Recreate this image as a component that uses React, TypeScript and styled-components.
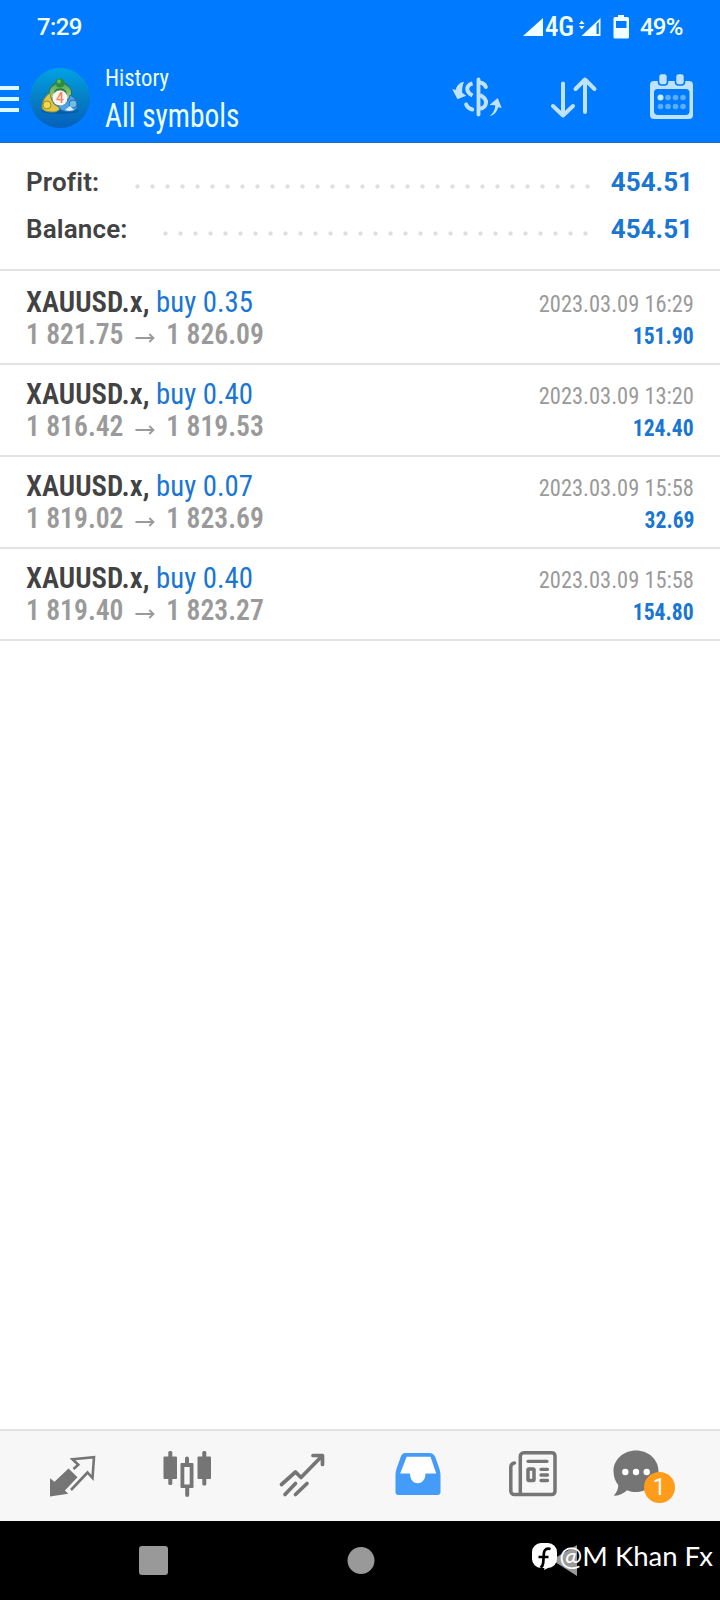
import React from 'react';
import styled, { createGlobalStyle } from 'styled-components';

const GlobalStyle = createGlobalStyle`
  *, *::before, *::after { box-sizing: border-box; }
  body {
    margin: 0;
    background: #fff;
    font-family: Roboto, "Liberation Sans", sans-serif;
  }
  svg { display: block; flex: none; overflow: visible; }
`;

const BLUE = '#1976d2';

const Screen = styled.div`
  display: flex;
  flex-direction: column;
  width: 720px;
  height: 1600px;
  background: #fff;
  overflow: hidden;
`;

const Header = styled.header`
  height: 143px;
  flex: none;
  background: #007aff;
  border-bottom: 1px solid #1a6fc4;
`;

const StatusBar = styled.div`
  display: flex;
  align-items: center;
  height: 54px;
  padding: 0 38px 0 37px;
  color: #f2ffff;
`;

const Clock = styled.span`
  flex: 1;
  font-size: 24px;
  font-weight: 500;
  letter-spacing: -0.6px;
`;

const Network = styled.span`
  width: 35px;
  padding-left: 2px;
  font-size: 27px;
  font-weight: 500;
  font-stretch: 75%;
  letter-spacing: -0.3px;
`;

const Percent = styled.span`
  width: 42px;
  font-size: 24px;
  font-weight: 500;
  letter-spacing: -0.8px;
`;

const BatterySlot = styled.span`
  margin: 0 11px 0 13px;
`;

const AppBar = styled.div`
  display: flex;
  height: 88px;
  align-items: flex-start;
`;

const MenuLines = styled.div`
  display: grid;
  gap: 7px;
  width: 19px;
  margin-top: 32px;
`;

const MenuLine = styled.i`
  height: 4px;
  background: #dcfaff;
`;

const Logo = styled.svg`
  margin: 14px 15px 0 11px;
`;

const Titles = styled.div`
  flex: 1;
  display: flex;
  flex-direction: column;
  padding-top: 8px;
  color: #ecffff;
  font-stretch: 75%;
`;

const Subtitle = styled.span`
  font-size: 24px;
  line-height: 32px;
  transform: scaleX(0.945);
  transform-origin: left;
`;

const Title = styled.h1`
  margin: 0;
  font-size: 32.5px;
  font-weight: 400;
  line-height: 45px;
  transform: scaleX(0.905);
  transform-origin: left;
`;

const Actions = styled.div`
  display: flex;
  margin-top: 15px;
  padding-right: 23px;
`;

const Action = styled.div<{ $gap?: number }>`
  margin-right: ${p => p.$gap ?? 0}px;
`;

const Summary = styled.section`
  flex: none;
  height: 128px;
  padding: 15px 27px 0 26px;
  border-bottom: 2px solid #e2e2e2;
`;

const SummaryRow = styled.div`
  display: flex;
  align-items: center;
  height: 47px;
  font-size: 26px;
  font-weight: 600;
`;

const SummaryLabel = styled.span<{ $width: number }>`
  width: ${p => p.$width}px;
  color: #424242;
  letter-spacing: 0.15px;
`;

const Dots = styled.span`
  flex: 1;
  height: 5px;
  margin: 10px 20px 0 0;
  background: radial-gradient(circle at 2.5px 2.5px, #dedede 1.7px, transparent 2.5px) 0 0 / 15px 5px repeat-x;
`;

const SummaryValue = styled.span`
  color: ${BLUE};
  font-weight: 700;
`;

const Deals = styled.ul`
  flex: 1;
  margin: 0;
  padding: 2px 0 0;
  list-style: none;
`;

const Deal = styled.li`
  display: flex;
  justify-content: space-between;
  height: 92px;
  padding: 13px 26px 0;
  border-bottom: 2px solid #e2e2e2;
  font-stretch: 75%;
`;

const DealSide = styled.div<{ $end?: boolean }>`
  display: flex;
  flex-direction: column;
  align-items: ${p => (p.$end ? 'flex-end' : 'flex-start')};
`;

const Symbol = styled.span`
  color: #424242;
  font-size: 30px;
  font-weight: 650;
  line-height: 32px;
  white-space: pre;
  transform: scaleX(0.959);
  transform-origin: left;
`;

const Volume = styled.span`
  color: ${BLUE};
  font-weight: 400;
`;

const Prices = styled.span`
  display: flex;
  align-items: center;
  color: #9a9a9a;
  font-size: 30px;
  font-weight: 650;
  line-height: 32px;
  transform: scaleX(0.92);
  transform-origin: left;
`;

const Arrow = styled.svg`
  margin: 7px 12.5px 0 13.5px;
`;

const Time = styled.span`
  color: #9a9a9a;
  font-size: 24px;
  line-height: 36px;
  transform: scaleX(0.935);
  transform-origin: right;
`;

const Gain = styled.span`
  color: ${BLUE};
  font-size: 24px;
  font-weight: 700;
  line-height: 28px;
  transform: scaleX(0.9);
  transform-origin: right;
`;

const TabBar = styled.nav`
  display: flex;
  align-items: center;
  height: 92px;
  flex: none;
  padding: 0 14px;
  background: #f7f7f7;
  border-top: 2px solid #e2e2e2;
`;

const Tab = styled.div<{ $drop?: number; $trail?: number }>`
  position: relative;
  display: flex;
  justify-content: center;
  width: calc(100% / 6);
  padding: ${p => p.$drop ?? 0}px ${p => p.$trail ?? 0}px 0 0;
`;

const Badge = styled.span`
  position: absolute;
  left: 53px;
  top: 20px;
  width: 31px;
  height: 31px;
  border-radius: 50%;
  background: #ff9c1a;
  color: #fff;
  font-size: 23px;
  line-height: 32px;
  text-align: center;
`;

const SystemBar = styled.footer`
  position: relative;
  display: flex;
  align-items: center;
  height: 79px;
  flex: none;
  padding: 0 143px 0 139px;
  justify-content: space-between;
  background: #000;
`;

const Watermark = styled.div`
  position: absolute;
  right: 7px;
  top: 14px;
  display: flex;
  align-items: center;
  gap: 2px;
  height: 40px;
  color: #fff;
  font-family: Lato, sans-serif;
  font-size: 27.5px;
  white-space: pre;
`;

const FacebookMark = styled.svg`
  margin-top: 3px;
`;

const deals = [
  { symbol: 'XAUUSD.x', side: 'buy 0.35', open: '1 821.75', close: '1 826.09', time: '2023.03.09 16:29', gain: '151.90' },
  { symbol: 'XAUUSD.x', side: 'buy 0.40', open: '1 816.42', close: '1 819.53', time: '2023.03.09 13:20', gain: '124.40' },
  { symbol: 'XAUUSD.x', side: 'buy 0.07', open: '1 819.02', close: '1 823.69', time: '2023.03.09 15:58', gain: '32.69' },
  { symbol: 'XAUUSD.x', side: 'buy 0.40', open: '1 819.40', close: '1 823.27', time: '2023.03.09 15:58', gain: '154.80' },
];

const AppLogo = () => (
  <Logo width="60" height="60" viewBox="0 0 60 60">
    <defs>
      <linearGradient id="disc" x1="0" y1="0" x2="0" y2="1">
        <stop offset="0" stopColor="#00a3e4" />
        <stop offset="0.5" stopColor="#067fc6" />
        <stop offset="1" stopColor="#0560bd" />
      </linearGradient>
      <linearGradient id="green" x1="0" y1="0" x2="0" y2="1">
        <stop offset="0" stopColor="#5fae5c" />
        <stop offset="1" stopColor="#a3d488" />
      </linearGradient>
    </defs>
    <circle cx="30" cy="30" r="30" fill="url(#disc)" />
    <ellipse cx="30" cy="43" rx="19" ry="3" fill="#064a93" opacity="0.5" />
    <path d="M23 29c-3-7 1-11 7-11s11 4 8 12" fill="#3f8f5c" stroke="#2c7443" strokeWidth="6.500" />
    <path d="M23 29c-3-7 1-11 7-11s11 4 8 12" fill="none" stroke="url(#green)" strokeWidth="4.500" />
    <path d="M20 25c-5 3-8 9-8 14 0 4 6 5 11 5 4 0 7-2 7-5-6-1-9-6-10-14z" fill="#dfc548" stroke="#8c8f34" strokeWidth="1" />
    <path d="M40 27c5 2 8 8 7 13-2 4-9 4-13 3-4-1-5-3-6-6 7 0 11-4 12-10z" fill="#4fa2df" stroke="#1e6fb6" strokeWidth="1" />
    <circle cx="17" cy="37" r="4" fill="#f0d94e" stroke="#9a8d28" strokeWidth="1" />
    <circle cx="43" cy="36" r="4" fill="#72bbed" stroke="#286fae" strokeWidth="1" />
    <circle cx="30" cy="15" r="4.600" fill="#2c8c3e" />
    <circle cx="29" cy="13.500" r="2" fill="#5fbb61" />
    <path d="M35 42l5-4 4 4-5 1z" fill="#d8f0fb" />
    <circle cx="30" cy="30" r="7.600" fill="#fff6ef" />
    <text x="30" y="35" textAnchor="middle" fontSize="14" fontWeight="500" fill="#ee8667" fontFamily="Roboto">4</text>
  </Logo>
);

const SwapCurrencyIcon = () => (
  <svg width="60" height="56" viewBox="0 0 60 56" fill="none" stroke="#bfe3ff" strokeWidth="4">
    <path d="M30.500 10.500v35" strokeLinecap="round" strokeWidth="3.800" />
    <path d="M24.500 14.300c-4 1.200-5.500 3.200-5.200 6.200.3 2.500 1.900 4.300 5.200 6" />
    <path d="M32 13.500c3.500.5 5 2 5.800 4.500" strokeLinecap="round" />
    <path d="M32 26c4.500 2.500 6.500 4.500 6 8-.4 3-2.300 5-6 5.800" />
    <path d="M18.200 35.500c.8 2.500 2.800 4.300 6 5" strokeLinecap="round" />
    <path d="M16 12.700C11 13.500 8.500 17 7.700 21L4.200 20l5.300 10.300 8.700-3.500-4-3c-.3-3.500.3-7.500 1.800-11.100z" fill="#bfe3ff" stroke="none" />
    <path d="M41.500 47c4.500-3.500 5.500-6.800 5.700-10.800L41.500 36l8.200-7 4 10-3.500-.7c-1.300 4-3.700 8.200-8.700 8.700z" fill="#bfe3ff" stroke="none" />
  </svg>
);

const SortIcon = () => (
  <svg width="58" height="56" viewBox="0 0 58 56" fill="none" stroke="#bfe3ff" strokeWidth="4" strokeLinecap="round" strokeLinejoin="round">
    <path d="M18 14.500v32M8 37l10 9.500L28 37M40 43V10.500M30.500 20l9.500-9.500 9.500 9.500" />
  </svg>
);

const CalendarIcon = () => (
  <svg width="50" height="56" viewBox="0 0 50 56">
    <path d="M8 12h34a4 4 0 0 1 4 4v30a4 4 0 0 1-4 4H7a4 4 0 0 1-4-4V16a4 4 0 0 1 4-4zM10.500 20a3.500 3.500 0 0 0-3.500 3.500V42a4 4 0 0 0 4 4h27.500a4 4 0 0 0 4-4V23.500a3.500 3.500 0 0 0-3.500-3.500z" fill="#bfe3ff" fillRule="evenodd" />
    <g fill="#bfe3ff" stroke="#007aff" strokeWidth="1.600">
      <rect x="11.500" y="4.500" width="9" height="11.500" rx="3" />
      <rect x="28.500" y="4.500" width="9" height="11.500" rx="3" />
    </g>
    <circle cx="13.500" cy="28.500" r="3" fill="#c8ecff" />
    <g fill="#5caeff">
      {[21, 28.5, 36].map(x => <circle key={x} cx={x} cy="28.500" r="2.800" />)}
      {[13.5, 21, 28.5, 36].map(x => <circle key={x} cx={x} cy="37.500" r="2.800" />)}
    </g>
  </svg>
);

const TradeIcon = () => (
  <svg width="48" height="48" viewBox="0 0 48 48">
    <path d="M20.500 13.500l9 8.700-12.600 13.300 3.300 3.300L2 41.500V23.300l4.500 3.500z" fill="#757575" />
    <path d="M25.500 14l4.800-4.300-5.800-5.500 21.500-2L44.500 23l-5-5.500L23 35" fill="none" stroke="#757575" strokeWidth="2.600" />
  </svg>
);

const CandlesIcon = () => (
  <svg width="48" height="48" viewBox="1 0 48 48" fill="#757575">
    <rect x="1.500" y="4.500" width="13.500" height="22.500" rx="1" /><rect x="6.300" y="-1" width="4" height="34" rx="1.500" />
    <rect x="35.500" y="4.500" width="13.500" height="22.500" rx="1" /><rect x="40.300" y="-1" width="4" height="34.500" rx="1.500" />
    <path d="M19.500 11H23V6.500a1.800 1.800 0 0 1 4 0V11h3.500a1 1 0 0 1 1 1V35a1 1 0 0 1-1 1h-3.300v7a2 2 0 0 1-4 0v-7H19.500a1 1 0 0 1-1-1V12a1 1 0 0 1 1-1zM22.300 15v17.500h5.400V15z" fillRule="evenodd" />
  </svg>
);

const TrendIcon = () => (
  <svg width="48" height="48" viewBox="0 0 48 48" fill="none" stroke="#757575" strokeWidth="3.700" strokeLinecap="round" strokeLinejoin="round">
    <path d="M3.500 30.500L17.500 18l5.500 5.500L44 2M35 1.500h9.500v9M7 40.500L17.500 29.500M17.500 40.500L29 29.500" />
  </svg>
);

const InboxIcon = () => (
  <svg width="48" height="48" viewBox="0 0 48 48">
    <path d="M12 0h23c3.500 0 5.300 1.500 6.500 4.500C44 12 46.500 17 46.500 22v17a3 3 0 0 1-3 3h-39a3 3 0 0 1-3-3V22c0-5 2.500-10 5-17.500C7.500 1.500 8.500 0 12 0z" fill="#459cf8" />
    <path d="M12.700 3.800 6.200 20.500H16c0 13 15.500 13 15.500 0H42.200L36.500 3.800z" fill="#fff" />
  </svg>
);

const NewsIcon = () => (
  <svg width="50" height="48" viewBox="0 0 50 48" fill="none" stroke="#757575" strokeWidth="3.500">
    <path d="M6.500 11a4 4 0 0 0-3.700 4v24a3.500 3.500 0 0 0 3.500 3.500H44A3.500 3.500 0 0 0 47 39V3.500A3.500 3.500 0 0 0 43.500.7H15.800a3.500 3.500 0 0 0-3.500 3.500V42" strokeLinecap="round" />
    <path d="M20 9.300h19M33 17.300h6.500M33 23h6.500M33 28.500h6.500" strokeLinecap="round" strokeWidth="3.300" />
    <rect x="20" y="17" width="6" height="11.500" rx="1" />
  </svg>
);

const ChatIcon = () => (
  <svg width="50" height="48" viewBox="0 0 50 48">
    <path d="M24 -1.500c12.500 0 22.500 9 22.500 20.500S36.500 40 24 40c-3.500 0-6-.5-9-1.800-3.500 3.500-8 5.500-13.300 5.500 3.200-3.500 4.700-7 4.500-10.700C3.200 29.500 1.500 24.500 1.500 19 1.500 7.500 11.500-1.500 24-1.500z" fill="#757575" />
    <g fill="#fff"><circle cx="13.300" cy="20" r="3.200" /><circle cx="24" cy="20" r="3.200" /><circle cx="34.700" cy="20" r="3.200" /></g>
  </svg>
);

export default function App() {
  return (
    <Screen>
      <GlobalStyle />
      <Header>
        <StatusBar>
          <Clock>7:29</Clock>
          <svg width="20" height="18" viewBox="0 0 20 18"><path d="M0 18L20 0v18z" fill="#f2ffff" /></svg>
          <Network>4G</Network>
          <svg width="22" height="18" viewBox="0 0 22 18">
            <path d="M1 6L3.800 2.500 6.600 6zM1 8l2.800 3.500L6.600 8z" fill="#f2ffff" />
            <path d="M3.500 18L22.500 0v18zM18.500 6v10h2.300V4z" fill="#f2ffff" fillRule="evenodd" />
          </svg>
          <BatterySlot>
            <svg width="16" height="24" viewBox="13 0 16 24">
              <path d="M18 0h6v2h3.500a1.500 1.500 0 0 1 1.500 1.500v18.500a1.500 1.500 0 0 1-1.500 1.500H15a1.500 1.500 0 0 1-1.500-1.500V3.500a1.500 1.500 0 0 1 1.500-1.500H18zM16 6v7h10.500V6z" fill="#f2ffff" fillRule="evenodd" />
            </svg>
          </BatterySlot>
          <Percent>49%</Percent>
        </StatusBar>
        <AppBar>
          <MenuLines><MenuLine /><MenuLine /><MenuLine /></MenuLines>
          <AppLogo />
          <Titles>
            <Subtitle>History</Subtitle>
            <Title>All symbols</Title>
          </Titles>
          <Actions>
            <Action $gap={37}><SwapCurrencyIcon /></Action>
            <Action $gap={44}><SortIcon /></Action>
            <Action><CalendarIcon /></Action>
          </Actions>
        </AppBar>
      </Header>

      <Summary>
        <SummaryRow>
          <SummaryLabel $width={109}>Profit:</SummaryLabel>
          <Dots />
          <SummaryValue>454.51</SummaryValue>
        </SummaryRow>
        <SummaryRow>
          <SummaryLabel $width={137}>Balance:</SummaryLabel>
          <Dots />
          <SummaryValue>454.51</SummaryValue>
        </SummaryRow>
      </Summary>

      <Deals>
        {deals.map((d, i) => (
          <Deal key={i}>
            <DealSide>
              <Symbol>{d.symbol}, <Volume>{d.side}</Volume></Symbol>
              <Prices>
                {d.open}
                <Arrow width="20.500" height="10" viewBox="0 0 20.500 10" fill="none" stroke="#9a9a9a" strokeWidth="2">
                  <path d="M0 5h19.500M15 1l4.500 4-4.500 4" />
                </Arrow>
                {d.close}
              </Prices>
            </DealSide>
            <DealSide $end>
              <Time>{d.time}</Time>
              <Gain>{d.gain}</Gain>
            </DealSide>
          </Deal>
        ))}
      </Deals>

      <TabBar>
        <Tab $drop={5}><TradeIcon /></Tab>
        <Tab><CandlesIcon /></Tab>
        <Tab $drop={4}><TrendIcon /></Tab>
        <Tab $drop={2}><InboxIcon /></Tab>
        <Tab><NewsIcon /></Tab>
        <Tab $trail={22}><ChatIcon /><Badge>1</Badge></Tab>
      </TabBar>

      <SystemBar>
        <svg width="29" height="29"><rect width="29" height="29" rx="3" fill="#999" /></svg>
        <svg width="28" height="28"><circle cx="14" cy="13.500" r="13.500" fill="#999" /></svg>
        <svg width="24" height="31" viewBox="0 0 24 31"><path d="M24 0v31L2 17v-4z" fill="#999" /></svg>
        <Watermark>
          <FacebookMark width="25" height="27" viewBox="0 0 25 27">
            <path d="M9 0h7a9 9 0 0 1 9 9v7a9 9 0 0 1-9 9l-4 2 .5-2H9a9 9 0 0 1-9-9V9a9 9 0 0 1 9-9z" fill="#fff" />
            <path d="M18.500 6c-4-1.200-6.300.5-6.600 4.200L11.200 20c-.2 2-1 3.500-2.700 4.500M6.500 14h10" fill="none" stroke="#000" strokeWidth="2.700" />
          </FacebookMark>
          @M Khan Fx
        </Watermark>
      </SystemBar>
    </Screen>
  );
}
